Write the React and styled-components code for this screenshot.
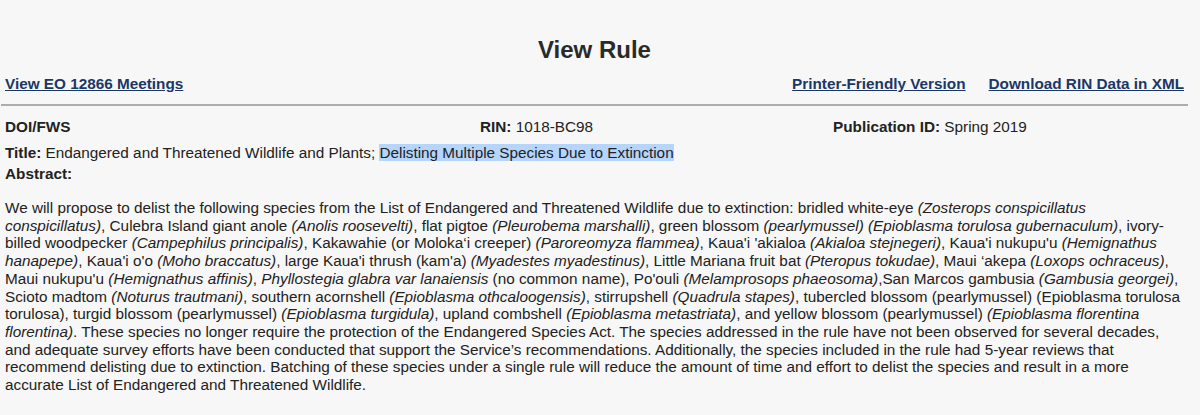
import React from 'react';
import styled, { createGlobalStyle } from 'styled-components';

const GlobalStyle = createGlobalStyle`
  html, body {
    margin: 0;
    padding: 0;
    background: #f7f7f7;
  }
  body {
    font-family: 'Liberation Sans', Arial, Helvetica, sans-serif;
    color: #222;
  }
`;

const Page = styled.div`
  width: 1187px;
  padding-left: 1px;
  min-height: 415px;
  background: #f7f7f7;
`;

const Heading = styled.h1`
  margin: 0;
  padding-top: 36px;
  font-size: 24px;
  line-height: 28px;
  font-weight: bold;
  text-align: center;
  color: #2a2a2a;
`;

const LinkBar = styled.div`
  display: flex;
  justify-content: space-between;
  align-items: center;
  margin-top: 11px;
  padding: 0 4px;
  line-height: 18px;
`;

const LinkGroup = styled.div`
  display: flex;
  gap: 23px;
`;

const NavLink = styled.a`
  font-size: 15.3px;
  font-weight: bold;
  color: #1b3767;
  text-decoration: underline;
  cursor: pointer;
`;

const Divider = styled.hr`
  margin: 11px 0 0;
  border: 0;
  height: 2px;
  background: #adadad;
`;

const MetaRow = styled.div`
  display: grid;
  grid-template-columns: 475px 353px 1fr;
  margin-top: 12px;
  padding: 0 4px;
  font-size: 15.3px;
  line-height: 18px;
`;

const Label = styled.b`
  font-weight: bold;
  color: #222;
`;

const Line = styled.div`
  padding: 0 4px;
  font-size: 15.3px;
  line-height: ${p => p.$lh || '19px'};
  margin-top: ${p => p.$gap || '0'};
`;

const Marked = styled.span`
  background: #b5d5fc;
`;

const Abstract = styled.div`
  margin-top: 16px;
  padding: 0 4px;
  width: 1185px;
  font-size: 15.3px;
  line-height: 17.7px;
  color: #222;
`;

const AbstractLine = styled.div`
  white-space: nowrap;
`;

// each line of the abstract as wrapped on the page; [text, italic]
const abstractLines = [
  [
    ['We will propose to delist the following species from the List of Endangered and Threatened Wildlife due to extinction: bridled white-eye ', false],
    ['(Zosterops conspicillatus', true],
  ],
  [
    ['conspicillatus)', true],
    [', Culebra Island giant anole ', false],
    ['(Anolis roosevelti)', true],
    [', flat pigtoe ', false],
    ['(Pleurobema marshalli)', true],
    [', green blossom ', false],
    ['(pearlymussel) (Epioblasma torulosa gubernaculum)', true],
    [', ivory-', false],
  ],
  [
    ['billed woodpecker ', false],
    ['(Campephilus principalis)', true],
    [', Kakawahie (or Moloka\u2018i creeper) ', false],
    ['(Paroreomyza flammea)', true],
    [", Kaua'i 'akialoa ", false],
    ['(Akialoa stejnegeri)', true],
    [", Kaua'i nukupu'u ", false],
    ['(Hemignathus', true],
  ],
  [
    ['hanapepe)', true],
    [", Kaua'i o'o ", false],
    ['(Moho braccatus)', true],
    [", large Kaua'i thrush (kam'a) ", false],
    ['(Myadestes myadestinus)', true],
    [', Little Mariana fruit bat ', false],
    ['(Pteropus tokudae)', true],
    [', Maui \u2018akepa ', false],
    ['(Loxops ochraceus)', true],
    [',', false],
  ],
  [
    ["Maui nukupu'u ", false],
    ['(Hemignathus affinis)', true],
    [', ', false],
    ['Phyllostegia glabra var lanaiensis', true],
    [" (no common name), Po'ouli ", false],
    ['(Melamprosops phaeosoma)', true],
    [',San Marcos gambusia ', false],
    ['(Gambusia georgei)', true],
    [',', false],
  ],
  [
    ['Scioto madtom ', false],
    ['(Noturus trautmani)', true],
    [', southern acornshell ', false],
    ['(Epioblasma othcaloogensis)', true],
    [', stirrupshell ', false],
    ['(Quadrula stapes)', true],
    [', tubercled blossom (pearlymussel) (Epioblasma torulosa', false],
  ],
  [
    ['torulosa), turgid blossom (pearlymussel) ', false],
    ['(Epioblasma turgidula)', true],
    [', upland combshell ', false],
    ['(Epioblasma metastriata)', true],
    [', and yellow blossom (pearlymussel) ', false],
    ['(Epioblasma florentina', true],
  ],
  [
    ['florentina)', true],
    ['. These species no longer require the protection of the Endangered Species Act. The species addressed in the rule have not been observed for several decades,', false],
  ],
  [['and adequate survey efforts have been conducted that support the Service\u2019s recommendations. Additionally, the species included in the rule had 5-year reviews that', false]],
  [['recommend delisting due to extinction. Batching of these species under a single rule will reduce the amount of time and effort to delist the species and result in a more', false]],
  [['accurate List of Endangered and Threatened Wildlife.', false]],
];

export default function App() {
  return (
    <>
      <GlobalStyle />
      <Page>
        <Heading>View Rule</Heading>
        <LinkBar>
          <NavLink>View EO 12866 Meetings</NavLink>
          <LinkGroup>
            <NavLink>Printer-Friendly Version</NavLink>
            <NavLink>Download RIN Data in XML</NavLink>
          </LinkGroup>
        </LinkBar>
        <Divider />
        <MetaRow>
          <Label>DOI/FWS</Label>
          <span>
            <Label>RIN:</Label> 1018-BC98
          </span>
          <span>
            <Label>Publication ID:</Label> Spring 2019
          </span>
        </MetaRow>
        <Line $gap="7px">
          <Label>Title:</Label> Endangered and Threatened Wildlife and Plants;{' '}
          <Marked>Delisting Multiple Species Due to Extinction</Marked>
        </Line>
        <Line $gap="3px" $lh="18px">
          <Label>Abstract:</Label>
        </Line>
        <Abstract>
          {abstractLines.map((parts, i) => (
            <AbstractLine key={i}>
              {parts.map(([text, italic], j) =>
                italic ? <i key={j}>{text}</i> : <span key={j}>{text}</span>
              )}
            </AbstractLine>
          ))}
        </Abstract>
      </Page>
    </>
  );
}
